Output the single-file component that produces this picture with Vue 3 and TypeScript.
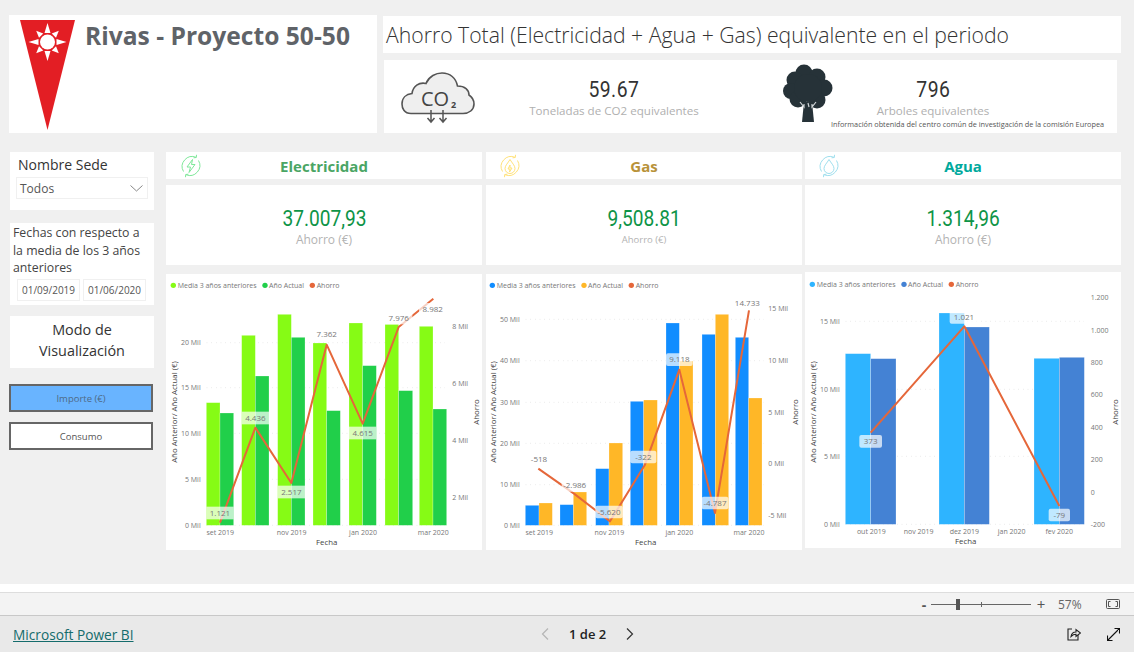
<script setup lang="ts">
interface Tick {
  label: string;
  y: number;
}
interface Label {
  text: string;
  x: number;
  y: number;
  w: number;
}
interface Chart {
  key: string;
  name: string;
  nameColor: string;
  kpi: string;
  smallLabel?: boolean;
  prevColor: string;
  currColor: string;
  viewBox: string;
  legendY: number;
  base: number;
  fechaY: number;
  xY: number;
  rightX: number;
  // [x, width, top] in chart units (1 unit = 1/3 px)
  prev: number[][];
  curr: number[][];
  line: string;
  left: Tick[];
  right: Tick[];
  xLabels: { label: string; x: number }[];
  labels: Label[];
}

const charts: Chart[] = [
  {
    key: "elec",
    name: "Electricidad",
    nameColor: "#4aa564",
    kpi: "37.007,93",
    prevColor: "#86fb15",
    currColor: "#21cf4a",
    viewBox: "3 6 948 828",
    legendY: 40,
    base: 760,
    fechaY: 813,
    xY: 782,
    rightX: 862,
    prev: [[124, 41, 392], [230, 41, 190], [338, 41, 127], [444, 41, 213], [552, 41, 153], [660, 41, 157], [763, 41, 163]],
    curr: [[165, 41, 423], [271, 41, 312], [379, 41, 196], [485, 41, 416], [593, 41, 281], [701, 42, 356], [804, 41, 411]],
    line: "165,752 271,467 379,633 485,218 593,455 701,165 805,80",
    left: [
      { label: "0 Mil", y: 760 },
      { label: "5 Mil", y: 622 },
      { label: "10 Mil", y: 484 },
      { label: "15 Mil", y: 347 },
      { label: "20 Mil", y: 212 },
    ],
    right: [
      { label: "2 Mil", y: 676 },
      { label: "4 Mil", y: 505 },
      { label: "6 Mil", y: 334 },
      { label: "8 Mil", y: 165 },
    ],
    xLabels: [
      { label: "set 2019", x: 166 },
      { label: "nov 2019", x: 380 },
      { label: "jan 2020", x: 594 },
      { label: "mar 2020", x: 805 },
    ],
    labels: [
      { text: "1.121", x: 165, y: 723, w: 82 },
      { text: "4.436", x: 271, y: 438, w: 82 },
      { text: "2.517", x: 379, y: 660, w: 82 },
      { text: "7.362", x: 485, y: 188, w: 82 },
      { text: "4.615", x: 593, y: 483, w: 82 },
      { text: "7.976", x: 701, y: 138, w: 82 },
      { text: "8.982", x: 803, y: 112, w: 82 },
    ],
  },
  {
    key: "gas",
    name: "Gas",
    nameColor: "#b8923a",
    kpi: "9,508.81",
    smallLabel: true,
    prevColor: "#118dff",
    currColor: "#ffb727",
    viewBox: "6 6 948 828",
    legendY: 40,
    base: 760,
    fechaY: 813,
    xY: 782,
    rightX: 853,
    prev: [[124, 41, 700], [228, 40, 698], [335, 40, 590], [439, 40, 388], [546, 40, 153], [654, 40, 187], [754, 40, 196]],
    curr: [[165, 40, 693], [268, 40, 660], [375, 41, 513], [479, 41, 384], [586, 41, 267], [694, 40, 127], [794, 40, 378]],
    line: "163,590 270,665 378,748 482,580 586,293 693,723 795,115",
    left: [
      { label: "0 Mil", y: 760 },
      { label: "10 Mil", y: 638 },
      { label: "20 Mil", y: 514 },
      { label: "30 Mil", y: 391 },
      { label: "40 Mil", y: 266 },
      { label: "50 Mil", y: 142 },
    ],
    right: [
      { label: "15 Mil", y: 109 },
      { label: "10 Mil", y: 265 },
      { label: "5 Mil", y: 421 },
      { label: "0 Mil", y: 574 },
      { label: "-5 Mil", y: 730 },
    ],
    xLabels: [
      { label: "set 2019", x: 166 },
      { label: "nov 2019", x: 376 },
      { label: "jan 2020", x: 586 },
      { label: "mar 2020", x: 795 },
    ],
    labels: [
      { text: "-518", x: 165, y: 562, w: 78 },
      { text: "-2.986", x: 272, y: 640, w: 78 },
      { text: "-5.620", x: 375, y: 720, w: 82 },
      { text: "-322", x: 478, y: 555, w: 78 },
      { text: "9.118", x: 586, y: 263, w: 80 },
      { text: "-4.787", x: 693, y: 693, w: 80 },
      { text: "14.733", x: 790, y: 93, w: 80 },
    ],
  },
  {
    key: "agua",
    name: "Agua",
    nameColor: "#00a99d",
    kpi: "1.314,96",
    prevColor: "#2eb4ff",
    currColor: "#4482d4",
    viewBox: "3 0 948 828",
    legendY: 37,
    base: 757,
    fechaY: 810,
    xY: 778,
    rightX: 860,
    prev: [[124, 76, 245], [405, 76, 123], [690, 76, 259]],
    curr: [[200, 76, 260], [481, 75, 165], [766, 75, 256]],
    line: "200,482 481,163 766,702",
    left: [
      { label: "0 Mil", y: 757 },
      { label: "5 Mil", y: 553 },
      { label: "10 Mil", y: 352 },
      { label: "15 Mil", y: 148 },
    ],
    right: [
      { label: "1.200", y: 78 },
      { label: "1.000", y: 175 },
      { label: "800", y: 272 },
      { label: "600", y: 367 },
      { label: "400", y: 467 },
      { label: "200", y: 562 },
      { label: "0", y: 661 },
      { label: "-200", y: 757 },
    ],
    xLabels: [
      { label: "out 2019", x: 202 },
      { label: "nov 2019", x: 344 },
      { label: "dez 2019", x: 481 },
      { label: "jan 2020", x: 623 },
      { label: "fev 2020", x: 766 },
    ],
    labels: [
      { text: "373", x: 200, y: 508, w: 68 },
      { text: "1.021", x: 480, y: 136, w: 86 },
      { text: "-79", x: 766, y: 729, w: 64 },
    ],
  },
];

// sun rays of the logo: 8 spikes around the centre
const rays = [0, 45, 90, 135, 180, 225, 270, 315];
</script>

<template>
  <div class="page">
    <div class="canvas">
      <div class="top">
        <div class="brand">
          <svg class="logo" width="55" height="110" viewBox="0 0 55 110">
            <polygon points="0,0 55,0 27.5,110" fill="#e31e24" />
            <g transform="translate(27.5 22)">
              <circle r="7.5" fill="#fff" />
              <polygon
                v-for="a in rays"
                :key="a"
                :points="a % 90 === 0 ? '-3,-9 3,-9 0,-19' : '-3,-9 3,-9 0,-16'"
                :transform="`rotate(${a})`"
                fill="#fff"
              />
            </g>
          </svg>
          <h1 class="brand-title">Rivas - Proyecto 50-50</h1>
        </div>
        <div class="summary">
          <div class="heading">Ahorro Total (Electricidad + Agua + Gas) equivalente en el periodo</div>
          <div class="stats">
            <svg class="cloud" width="74" height="52" viewBox="0 0 74 52">
              <path
                d="M10 41.500 C3 41.500 1 36 1 32 C1 26 5 22 11 21.500 C12 14 18 10 25 11.500 C28 4 35 1 41 1 C49 1 55 6 56.500 14 C64 14 68 18 68 23 C71 25 73 28 73 32 C73 38 68 41.500 62 41.500 Z"
                fill="#efefef"
                stroke="#555"
                stroke-width="1.600"
              />
              <text x="20" y="34" class="cloud-text">CO</text>
              <text x="50" y="36" class="cloud-sub">2</text>
              <path d="M30 38 V50 M26.500 46 L30 50 L33.500 46 M42 38 V50 M38.500 46 L42 50 L45.500 46" fill="none" stroke="#555" stroke-width="1.500" />
            </svg>
            <div class="stat stat-co2">
              <div class="stat-value">59.67</div>
              <div class="stat-label">Toneladas de CO2 equivalentes</div>
            </div>
            <svg class="tree" width="50" height="58" viewBox="0 0 50 58">
              <g fill="#263238">
                <circle cx="21" cy="9" r="8.500" />
                <circle cx="34" cy="13" r="8.500" />
                <circle cx="12" cy="16" r="8.500" />
                <circle cx="41" cy="24" r="8.500" />
                <circle cx="8" cy="27" r="8" />
                <circle cx="15" cy="35" r="8.500" />
                <circle cx="34" cy="36" r="8.500" />
                <circle cx="25" cy="24" r="14" />
                <path d="M19 58 L21 38 H29 L31 58 Z" />
              </g>
              <path d="M17 38 L21 43 L21 40 M25 39 L26 43 M33 38 L29 43 L29 40" fill="none" stroke="#cfd4d6" stroke-width="1.200" />
            </svg>
            <div class="stat stat-tree">
              <div class="stat-value">796</div>
              <div class="stat-label">Arboles equivalentes</div>
              <div class="stat-note">Información obtenida del centro común de investigación de la comisión Europea</div>
            </div>
          </div>
        </div>
      </div>

      <div class="main">
        <aside class="sidebar">
          <div class="card sede">
            <div class="sede-title">Nombre Sede</div>
            <div class="select">
              <span>Todos</span>
              <svg width="13" height="7" viewBox="0 0 13 7"><path d="M.5 .5 L6.500 6 L12.500 .5" fill="none" stroke="#888" /></svg>
            </div>
          </div>
          <div class="card fechas">
            <p class="fechas-text">Fechas con respecto a la media de los 3 años anteriores</p>
            <div class="dates">
              <span class="date">01/09/2019</span>
              <span class="date">01/06/2020</span>
            </div>
          </div>
          <div class="card modo">Modo de<br />Visualización</div>
          <button class="btn btn-on">Importe (€)</button>
          <button class="btn">Consumo</button>
        </aside>

        <section v-for="c in charts" :key="c.key" class="col" :class="'col-' + c.key">
          <div class="col-head">
            <svg class="col-icon" :class="'icon-' + c.key" width="24" height="24" viewBox="0 0 24 24" fill="none" stroke="currentColor" stroke-width="1">
              <path d="M4.500 17.500 A10 10 0 0 1 17 3.300" />
              <path d="M19.500 6.500 A10 10 0 0 1 7 20.700" />
              <path d="M17.500 .8 L17.300 3.500 L14.600 3.800 M6.500 23.200 L6.700 20.500 L9.400 20.200" />
              <path v-if="c.key === 'elec'" d="M13.500 5.500 L8 13 H11.500 L10 18.500 L16 10.500 H12.500 Z" />
              <template v-else>
                <path d="M12 5.500 C10 9 7 11.500 7 14.500 A5 5 0 0 0 17 14.500 C17 11.500 14 9 12 5.500 Z" />
                <path v-if="c.key === 'gas'" d="M12 11 L10 15 H12 L11.500 18 L14 14 H12 Z" />
              </template>
            </svg>
            <span class="col-name" :style="{ color: c.nameColor }">{{ c.name }}</span>
          </div>
          <div class="kpi">
            <div class="kpi-value">{{ c.kpi }}</div>
            <div class="kpi-label" :class="{ small: c.smallLabel }">Ahorro (€)</div>
          </div>
          <div class="chart">
            <svg class="plot" :viewBox="c.viewBox" width="316" height="276">
              <!-- legend -->
              <circle cx="25" :cy="c.legendY" r="8" :fill="c.prevColor" />
              <text x="38" :y="c.legendY + 7" class="t">Media 3 años anteriores</text>
              <circle cx="300" :cy="c.legendY" r="8" :fill="c.currColor" />
              <text x="312" :y="c.legendY + 7" class="t">Año Actual</text>
              <circle cx="442" :cy="c.legendY" r="8" fill="#e5673a" />
              <text x="455" :y="c.legendY + 7" class="t">Ahorro</text>

              <!-- grid and axes -->
              <line
                v-for="t in c.left"
                :key="'g' + t.label"
                x1="125"
                x2="840"
                :y1="t.y"
                :y2="t.y"
                stroke="#d4d4d4"
                stroke-width="2"
                stroke-dasharray="2 12"
              />
              <text v-for="t in c.left" :key="'l' + t.label" x="107" :y="t.y + 7" text-anchor="end" class="t">{{ t.label }}</text>
              <text v-for="t in c.right" :key="'r' + t.label" :x="c.rightX" :y="t.y + 7" class="t">{{ t.label }}</text>
              <text v-for="t in c.xLabels" :key="t.label" :x="t.x" :y="c.xY + 7" text-anchor="middle" class="t">{{ t.label }}</text>
              <text x="485" :y="c.fechaY + 7" text-anchor="middle" class="t-title">Fecha</text>
              <text text-anchor="middle" class="t-title" :transform="`translate(36 420) rotate(-90)`">Año Anterior/ Año Actual (€)</text>
              <text text-anchor="middle" class="t-title" :transform="`translate(942 420) rotate(-90)`">Ahorro</text>

              <!-- bars -->
              <rect
                v-for="(b, i) in c.prev"
                :key="'p' + i"
                :x="b[0]"
                :y="b[2]"
                :width="b[1]"
                :height="c.base - b[2]"
                :fill="c.prevColor"
                class="bar"
              />
              <rect
                v-for="(b, i) in c.curr"
                :key="'c' + i"
                :x="b[0]"
                :y="b[2]"
                :width="b[1]"
                :height="c.base - b[2]"
                :fill="c.currColor"
                class="bar"
              />

              <polyline :points="c.line" fill="none" stroke="#e5673a" stroke-width="6" stroke-linejoin="round" />

              <!-- data labels -->
              <g v-for="l in c.labels" :key="l.text">
                <rect :x="l.x - l.w / 2" :y="l.y - 19" :width="l.w" height="38" :rx="c.key === 'elec' ? 0 : 6" fill="#fff" fill-opacity="0.7" />
                <text :x="l.x" :y="l.y + 8" text-anchor="middle" class="t-data">{{ l.text }}</text>
              </g>
            </svg>
          </div>
        </section>
      </div>
    </div>

    <div class="gap"></div>

    <div class="zoombar">
      <span class="zoom-sign">-</span>
      <div class="slider">
        <span class="slider-tick"></span>
        <span class="slider-thumb"></span>
      </div>
      <span class="zoom-sign plus">+</span>
      <span class="zoom-pct">57%</span>
      <svg class="fit" width="14" height="10" viewBox="0 0 14 10" fill="none" stroke="#555">
        <rect x=".5" y=".5" width="13" height="9" rx="1" />
        <path d="M4.500 2.500 H2.500 V7.500 H4.500 M9.500 2.500 H11.500 V7.500 H9.500" />
      </svg>
    </div>

    <footer class="footer">
      <a class="pbi-link">Microsoft Power BI</a>
      <div class="pager">
        <svg width="8" height="12" viewBox="0 0 8 12"><path d="M7 .5 L1.500 6 L7 11.500" fill="none" stroke="#b5b5b5" stroke-width="1.200" /></svg>
        <span class="pager-text">1 de 2</span>
        <svg width="8" height="12" viewBox="0 0 8 12"><path d="M1 .5 L6.500 6 L1 11.500" fill="none" stroke="#333" stroke-width="1.200" /></svg>
      </div>
      <div class="foot-icons">
        <svg width="14" height="14" viewBox="0 0 14 14" fill="none" stroke="#222" stroke-width="1.100">
          <path d="M5 2 H1 V13 H11 V8" />
          <path d="M4 9.500 C4.500 6.500 6.500 5 9 5 V2.500 L13.500 6 L9 9.500 V7.300 C7 7.300 5.500 8 4 9.500 Z" />
        </svg>
        <svg width="13" height="13" viewBox="0 0 13 13" fill="none" stroke="#111" stroke-width="1.100">
          <path d="M.5 12.500 L12.500 .5 M7.500 .5 H12.500 V5.500 M.5 7.500 V12.500 H5.500" />
        </svg>
      </div>
    </footer>
  </div>
</template>

<style>
html,
body {
  margin: 0;
  background: #fff;
}
</style>

<style scoped>
.page {
  width: 1134px;
  height: 652px;
  display: flex;
  flex-direction: column;
  overflow: hidden;
  font-family: "Open Sans", "Liberation Sans", sans-serif;
}

.canvas {
  height: 584px;
  box-sizing: border-box;
  background: #f0f0f0;
  padding: 15px 13px 0 9px;
}

.top {
  display: flex;
  gap: 6px;
  height: 118px;
}

.brand {
  width: 368px;
  background: #fff;
  display: flex;
  align-items: flex-start;
  padding: 5px 0 0 11px;
  box-sizing: border-box;
}

.brand-title {
  margin: 2px 0 0 10px;
  font-size: 24.600px;
  font-weight: 700;
  line-height: 28px;
  color: #5f6368;
  white-space: nowrap;
}

.summary {
  flex: 1;
  display: flex;
  flex-direction: column;
  padding-top: 1px;
}

.heading {
  height: 37px;
  background: #fff;
  font-size: 21.200px;
  font-weight: 300;
  line-height: 37px;
  color: #333;
  padding-left: 3px;
  white-space: nowrap;
}

.stats {
  margin: 7px 4px 0 1px;
  height: 73px;
  background: #fff;
  display: flex;
  align-items: flex-start;
}

.cloud {
  margin: 12px 0 0 17px;
  flex: none;
}

.cloud-text {
  font-family: "Open Sans", sans-serif;
  font-size: 20px;
  fill: #444;
}

.cloud-sub {
  font-family: "Open Sans", sans-serif;
  font-size: 9px;
  font-weight: 700;
  fill: #444;
}

.tree {
  margin: 4px 0 0 30px;
  flex: none;
}

.stat {
  text-align: center;
  flex: none;
}

.stat-co2 {
  width: 278px;
  margin-top: 17px;
}

.stat-tree {
  width: 204px;
  margin-top: 17px;
  margin-left: -2px;
}

.stat-value {
  display: inline-block;
  font-family: Roboto, sans-serif;
  font-size: 22px;
  line-height: 26px;
  letter-spacing: 0.5px;
  color: #333;
  transform: scaleX(0.88);
}

.stat-label {
  font-size: 11.600px;
  line-height: 16px;
  color: #b0b0b0;
  white-space: nowrap;
}

.stat-note {
  font-size: 7.300px;
  line-height: 11px;
  color: #555;
  white-space: nowrap;
  text-align: left;
}

.main {
  display: flex;
  margin-top: 19px;
}

.sidebar {
  width: 145px;
  margin-right: 12px;
  flex: none;
  display: flex;
  flex-direction: column;
}

.card {
  margin-left: 1px;
  background: #fff;
  box-sizing: border-box;
}

.sede {
  height: 58px;
  padding: 4px 6px 0 6px;
}

.sede-title {
  font-size: 14px;
  line-height: 17px;
  color: #333;
  padding-left: 2px;
}

.select {
  margin-top: 4px;
  height: 22px;
  border: 1px solid #f0f0f0;
  box-sizing: border-box;
  display: flex;
  align-items: center;
  justify-content: space-between;
  padding: 1px 4px 0 3px;
  font-size: 12px;
  color: #555;
}

.fechas {
  margin-top: 13px;
  height: 82px;
  padding: 1px 0 0 3px;
}

.fechas-text {
  margin: 0;
  width: 136px;
  font-size: 12.300px;
  line-height: 17.500px;
  color: #444;
}

.dates {
  display: flex;
  gap: 3px;
  margin: 2px 0 0 4px;
}

.date {
  width: 63px;
  height: 22px;
  box-sizing: border-box;
  border: 1px solid #f0f0f0;
  font-size: 10px;
  line-height: 20px;
  text-align: center;
  color: #555;
}

.modo {
  margin-top: 11px;
  height: 52px;
  font-size: 14.400px;
  line-height: 21px;
  text-align: center;
  padding-top: 3px;
  color: #333;
}

.btn {
  display: block;
  width: 144px;
  height: 28px;
  margin: 10px 0 0;
  padding: 0;
  background: #fff;
  border: 2px solid #666;
  font-family: inherit;
  font-size: 9.500px;
  color: #555;
}

.btn-on {
  margin-top: 16px;
  background: #69b4ff;
  color: #4f6a86;
}

.col {
  width: 316px;
  flex: none;
  margin-right: 4px;
}

.col-agua {
  margin-left: -1px;
  margin-right: 0;
}

.col-head {
  position: relative;
  height: 27px;
  background: #fff;
  text-align: center;
}

.col-icon {
  position: absolute;
  left: 13px;
  top: 2px;
}

.icon-elec {
  color: #7fe89a;
}

.icon-gas {
  color: #ffe27a;
  left: 12px;
}

.icon-agua {
  color: #9fdfee;
  left: 12px;
}

.col-name {
  font-size: 15px;
  font-weight: 700;
  line-height: 29px;
}

.kpi {
  margin-top: 6px;
  height: 80px;
  background: #fff;
  text-align: center;
  padding-top: 20px;
  box-sizing: border-box;
}

.kpi-value {
  display: inline-block;
  font-family: Roboto, sans-serif;
  font-size: 22.500px;
  line-height: 26px;
  color: #0e9447;
  transform: scaleX(0.85);
}

.kpi-label {
  font-size: 12px;
  line-height: 18px;
  color: #b3b3b3;
}

.kpi-label.small {
  font-size: 9.500px;
}

.chart {
  margin-top: 9px;
  height: 276px;
  background: #fff;
}

.col-agua .chart {
  margin-top: 7px;
}

.plot {
  display: block;
}

.t {
  font-family: "Open Sans", sans-serif;
  font-size: 21px;
  fill: #777;
}

.t-title {
  font-family: "Open Sans", sans-serif;
  font-size: 23.500px;
  fill: #444;
}

.t-data {
  font-family: "Open Sans", sans-serif;
  font-size: 24px;
  fill: #777;
}

.bar {
  stroke: #fff;
  stroke-opacity: 0.35;
  stroke-width: 2;
}

.gap {
  height: 8px;
  background: #fff;
}

.zoombar {
  height: 22px;
  flex: none;
  background: #f3f3f3;
  border-top: 1px solid #ddd;
  border-bottom: 1px solid #c8c8c8;
  display: flex;
  align-items: center;
  justify-content: flex-end;
  color: #555;
}

.zoom-sign {
  font-size: 14px;
  font-weight: 700;
  width: 10px;
  text-align: center;
}

.slider {
  position: relative;
  width: 100px;
  height: 1px;
  margin: 0 5px 0 2px;
  background: #666;
}

.slider-tick {
  position: absolute;
  left: 50px;
  top: -2px;
  width: 1px;
  height: 5px;
  background: #666;
}

.slider-thumb {
  position: absolute;
  left: 25px;
  top: -5px;
  width: 4px;
  height: 11px;
  background: #555;
}

.plus {
  font-weight: 400;
  font-size: 15px;
}

.zoom-pct {
  width: 27px;
  margin: 0 21px 0 12px;
  font-size: 12px;
  color: #666;
}

.fit {
  margin-right: 14px;
}

.footer {
  flex: 1;
  background: #e9e9e9;
  display: grid;
  grid-template-columns: 528px auto 1fr;
  align-items: center;
  padding: 0 14px 0 13px;
}

.pbi-link {
  font-size: 13.700px;
  color: #146c6c;
  text-decoration: underline;
}

.pager {
  display: flex;
  align-items: center;
  gap: 20px;
}

.pager-text {
  font-size: 13px;
  font-weight: 600;
  color: #222;
}

.foot-icons {
  justify-self: end;
  display: flex;
  align-items: center;
  gap: 26px;
}
</style>
